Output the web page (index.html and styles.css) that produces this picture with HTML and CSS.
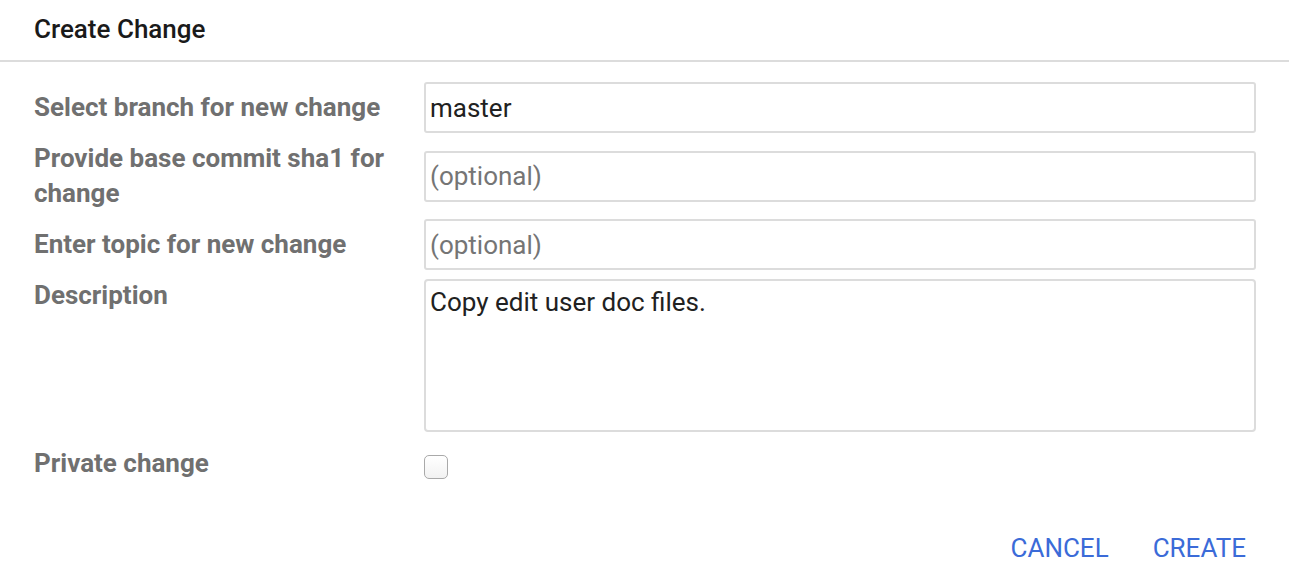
FILE: index.html
```html
<!DOCTYPE html>
<html>
<head>
<meta charset="utf-8">
<link rel="stylesheet" href="styles.css">
</head>
<body>
<div class="dialog">
  <header class="header">Create Change</header>
  <main class="form">
    <div class="row">
      <div class="label">Select branch for new change</div>
      <div class="field"><div class="input">master</div></div>
    </div>
    <div class="row">
      <div class="label">Provide base commit sha1 for change</div>
      <div class="field"><div class="input placeholder">(optional)</div></div>
    </div>
    <div class="row">
      <div class="label">Enter topic for new change</div>
      <div class="field"><div class="input placeholder">(optional)</div></div>
    </div>
    <div class="row row-desc">
      <div class="label">Description</div>
      <div class="field"><div class="textarea">Copy edit user doc files.</div></div>
    </div>
    <div class="row">
      <div class="label">Private change</div>
      <div class="field"><span class="checkbox"></span></div>
    </div>
  </main>
  <footer class="footer">
    <span class="btn">CANCEL</span>
    <span class="btn">CREATE</span>
  </footer>
</div>
</body>
</html>
```

FILE: styles.css
```css
html, body {
  margin: 0;
  padding: 0;
  background: #fff;
}
body {
  font-family: Roboto, "Liberation Sans", sans-serif;
  width: 1289px;
  height: 586px;
  overflow: hidden;
}
.header {
  height: 62px;
  box-sizing: border-box;
  padding: 0 34px 2px;
  display: flex;
  align-items: center;
  font-size: 26px;
  font-weight: 500;
  color: #1a1a1a;
  border-bottom: 2px solid #dcdcdc;
}
.form {
  padding: 12px 33px 0 34px;
}
.row {
  display: flex;
  align-items: center;
}
.row-desc {
  align-items: flex-start;
}
.label {
  width: 390px;
  flex: none;
  font-size: 26px;
  font-weight: 700;
  color: #707070;
  line-height: 35px;
}
.field {
  flex: 1;
  display: flex;
}
.input {
  flex: 1;
  height: 51px;
  margin: 8px 0;
  box-sizing: border-box;
  border: 2px solid #dcdcdc;
  border-radius: 3px;
  padding: 0 4px;
  display: flex;
  align-items: center;
  font-size: 26px;
  color: #212121;
}
.placeholder {
  color: #757575;
}
.textarea {
  flex: 1;
  height: 153px;
  margin: 1px 0 14px;
  box-sizing: border-box;
  border: 2px solid #dcdcdc;
  border-radius: 4px;
  padding: 6px 4px;
  font-size: 26px;
  line-height: 31px;
  color: #212121;
}
.checkbox {
  display: block;
  width: 24px;
  height: 24px;
  box-sizing: border-box;
  border: 1px solid #a9a9a9;
  border-radius: 5px;
  background: linear-gradient(#ffffff, #f2f2f2);
  margin-top: 6px;
}
.footer {
  display: flex;
  justify-content: flex-end;
  gap: 44px;
  padding: 50px 43px 0 0;
}
.btn {
  font-size: 26px;
  color: #3b6bd8;
  line-height: 35px;
}
```
